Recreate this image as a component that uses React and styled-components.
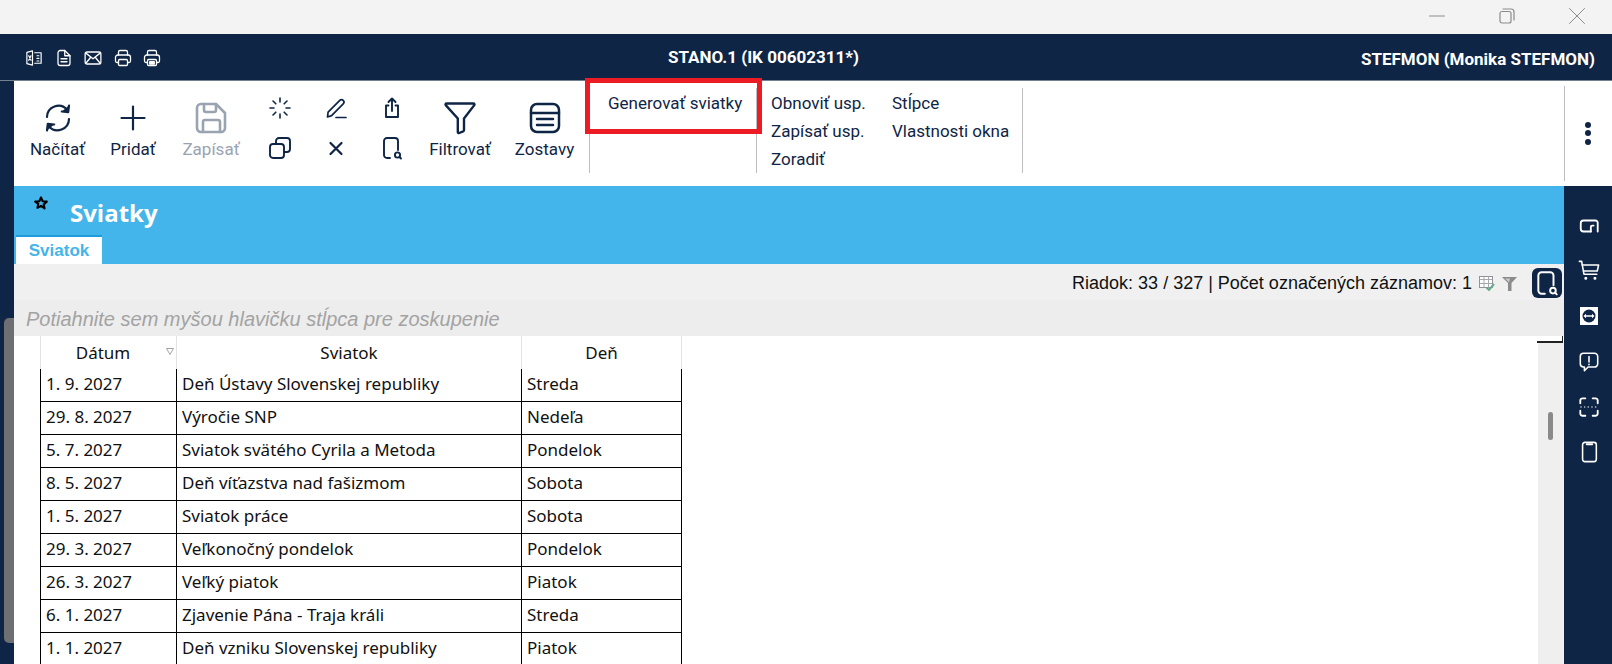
import React from "react";
import styled, { createGlobalStyle } from "styled-components";

const NAVY = "#0f2545";
const SKY = "#44b5ea";

const GlobalStyle = createGlobalStyle`
  html, body { margin: 0; padding: 0; overflow: hidden; background: #fff; }
  * { box-sizing: border-box; }
`;

const Page = styled.div`
  width: 1612px;
  height: 664px;
  display: flex;
  flex-direction: column;
  overflow: hidden;
  font-family: Roboto, sans-serif;
`;

const TitleBar = styled.div`
  height: 34px;
  flex: none;
  display: flex;
  justify-content: flex-end;
  background: #f3f3f3;
`;

const WindowButton = styled.div`
  width: 70px;
  display: flex;
  align-items: center;
  justify-content: center;
  padding-bottom: 2px;
`;

const Header = styled.header`
  height: 47px;
  flex: none;
  display: flex;
  align-items: center;
  padding: 0 17px 0 25px;
  background: ${NAVY};
  border-bottom: 1px solid #74808f;
  color: #fff;
`;

const HeaderIcons = styled.div`
  width: 643px;
  display: flex;
  gap: 11.5px;
  padding-top: 2px;
`;

const CompanyName = styled.div`
  font-size: 17px;
  font-weight: 700;
`;

const UserName = styled.div`
  margin-left: auto;
  margin-top: 4px;
  font-size: 17px;
  font-weight: 700;
`;

const Workspace = styled.div`
  flex: 1;
  min-height: 0;
  display: flex;
  background: ${NAVY};
`;

const LeftStrip = styled.div`
  width: 14px;
  flex: none;
  padding: 237px 0 0 4px;
`;

const PageThumb = styled.div`
  height: 325px;
  background: #6d6f72;
  border-radius: 5px 0 0 5px;
`;

const Main = styled.div`
  flex: 1;
  min-width: 0;
  display: flex;
  flex-direction: column;
`;

const Toolbar = styled.div`
  height: 105px;
  flex: none;
  display: flex;
  align-items: flex-start;
  padding: 7px 0 0 5px;
  background: #fff;
  color: ${NAVY};
  font-size: 17px;
`;

const BigButton = styled.div`
  width: ${(p) => p.$width}px;
  height: 85px;
  flex: none;
  display: flex;
  flex-direction: column;
  align-items: center;
  padding-top: 14px;
  color: ${(p) => (p.$disabled ? "#9aa3b1" : NAVY)};
  ${(p) => p.$divider && "border-right: 1px solid #bdbdbd;"}
`;

const BigIcon = styled.div`
  height: 32px;
  display: flex;
  align-items: center;
  justify-content: center;
`;

const BigLabel = styled.div`
  margin-top: 6px;
  line-height: 18px;
`;

const SmallGrid = styled.div`
  width: 168px;
  flex: none;
  display: grid;
  grid-template-columns: repeat(3, 56px);
  grid-auto-rows: 24px;
  row-gap: 16px;
  justify-items: center;
  padding-top: 8px;
`;

const GeneratorGroup = styled.div`
  position: relative;
  width: 167px;
  height: 85px;
  flex: none;
  padding: 1px 0 0 18px;
  border-right: 1px solid #bdbdbd;
  line-height: 28px;
`;

const Highlight = styled.div`
  position: absolute;
  left: -5px;
  top: -10px;
  width: 177px;
  height: 56px;
  border: 5px solid #ed1c24;
`;

const TextGroup = styled.div`
  width: 266px;
  height: 85px;
  flex: none;
  display: grid;
  grid-template-columns: 121px 1fr;
  grid-auto-rows: 28px;
  align-items: center;
  padding: 1px 0 0 14px;
  border-right: 1px solid #bdbdbd;
`;

const MoreButton = styled.div`
  width: 48px;
  height: 95px;
  flex: none;
  margin: -2px 0 0 auto;
  display: flex;
  flex-direction: column;
  align-items: center;
  justify-content: center;
  gap: 2.5px;
  padding: 0 1px 1px 0;
  border-left: 1px solid #bdbdbd;
`;

const Dot = styled.span`
  width: 6px;
  height: 6px;
  border-radius: 50%;
  background: ${NAVY};
`;

const BodyRow = styled.div`
  flex: 1;
  min-height: 0;
  display: flex;
`;

const Content = styled.div`
  flex: 1;
  min-width: 0;
  display: flex;
  flex-direction: column;
  background: #fff;
`;

const Banner = styled.div`
  height: 78px;
  flex: none;
  display: flex;
  flex-direction: column;
  background: ${SKY};
`;

const BannerHead = styled.div`
  height: 49px;
  display: flex;
  align-items: flex-start;
  padding-left: 20px;
`;

const Star = styled.div`
  margin-top: 9px;
  height: 14px;
`;

const PageTitle = styled.h1`
  margin: 12px 0 0 22px;
  font-family: "Open Sans", sans-serif;
  font-size: 24px;
  line-height: 30px;
  font-weight: 700;
  color: #fff;
`;

const Tab = styled.div`
  width: 86px;
  height: 29px;
  margin-left: 2px;
  display: flex;
  align-items: center;
  justify-content: center;
  border-top: 2px solid #1f9bdb;
  background: #fff;
  color: ${SKY};
  font-family: "Liberation Sans", sans-serif;
  font-size: 17px;
  font-weight: 700;
`;

const StatusBar = styled.div`
  height: 36px;
  flex: none;
  display: flex;
  align-items: center;
  justify-content: flex-end;
  padding: 2px 2px 0 0;
  background: #f0f0f0;
  font-family: "Liberation Sans", sans-serif;
  font-size: 18px;
  color: #111;
`;

const StatusText = styled.div`
  margin: 1px 7px 0 0;
`;

const StatusIcon = styled.div`
  height: 16px;
  margin-right: ${(p) => p.$gap}px;
`;

const SearchButton = styled.div`
  width: 30px;
  height: 30px;
  display: flex;
  align-items: center;
  justify-content: center;
  border-radius: 6px;
  background: ${NAVY};
  color: #fff;
`;

const GroupBar = styled.div`
  height: 36px;
  flex: none;
  display: flex;
  align-items: center;
  padding: 2px 0 0 12px;
  background: #ededed;
  color: #a3a3a3;
  font-family: "Liberation Sans", sans-serif;
  font-size: 20px;
  font-style: italic;
`;

const TableArea = styled.div`
  flex: 1;
  min-height: 0;
  display: flex;
`;

const TableWrap = styled.div`
  flex: 1;
  min-width: 0;
  overflow: hidden;
  padding-left: 26px;
`;

const Table = styled.table`
  width: 641px;
  table-layout: fixed;
  border-collapse: collapse;
  font-family: "Noto Sans", sans-serif;
  font-size: 17px;
  color: #111;
`;

const HeadCell = styled.th`
  position: relative;
  height: 33px;
  padding: 0 ${(p) => (p.$sorted ? 11 : 0)}px 0 0;
  border-left: 1px solid #e3e3e3;
  border-right: 1px solid #e3e3e3;
  font-weight: 400;
  text-align: center;
`;

const SortMark = styled.span`
  position: absolute;
  top: 12px;
  right: 2px;
  display: flex;
`;

const Cell = styled.td`
  height: 33px;
  padding: 0 0 2px 5px;
  border: 1px solid #000;
  white-space: nowrap;
`;

const HolidayRow = styled.tr`
  &:first-child td {
    height: 32px;
    border-top: none;
  }
`;

const ScrollTrack = styled.div`
  position: relative;
  width: 26px;
  flex: none;
  margin-top: 6px;
  padding: 70px 0 0 10px;
  background: #efefef;
`;

const ScrollCorner = styled.div`
  position: absolute;
  top: -6px;
  left: -1px;
  width: 26px;
  height: 7px;
  border-bottom: 2px solid #222;
  border-right: 1px solid #222;
`;

const ScrollThumb = styled.div`
  width: 5px;
  height: 28px;
  border-radius: 3px;
  background: #8a8a8a;
`;

const SideRail = styled.nav`
  width: 48px;
  flex: none;
  display: flex;
  flex-direction: column;
  align-items: center;
  gap: 23.2px;
  padding: 29px 0 0 2px;
  color: #fff;
`;

const Line = ({ size = 24, box = 24, color = "currentColor", width = 2, children }) => (
  <svg
    width={size}
    height={size}
    viewBox={`0 0 ${box} ${box}`}
    fill="none"
    stroke={color}
    strokeWidth={width}
    strokeLinecap="round"
    strokeLinejoin="round"
  >
    {children}
  </svg>
);

const RefreshIcon = () => (
  <Line size={32} box={32} width={2.2}>
    <path d="M5 15a11.5 11.5 0 0 1 20-7.5" />
    <path d="M27 3.5l-.8 6.6-6.4-.6" fill="currentColor" />
    <path d="M27 17a11.5 11.5 0 0 1-20 7.5" />
    <path d="M5 28.5l.8-6.6 6.4.6" fill="currentColor" />
  </Line>
);

const PlusIcon = () => (
  <Line size={26} box={26} width={2.2}>
    <path d="M13 1.5v23M1.5 13h23" />
  </Line>
);

const SaveIcon = () => (
  <Line size={32} box={32} width={2.6}>
    <path d="M6 2h15l9 9v15a4 4 0 0 1-4 4H6a4 4 0 0 1-4-4V6a4 4 0 0 1 4-4z" />
    <path d="M9 2v6a2 2 0 0 0 2 2h8a2 2 0 0 0 2-2V2" />
    <path d="M8 30V20a2 2 0 0 1 2-2h13a2 2 0 0 1 2 2v10" />
  </Line>
);

const SpinnerIcon = () => (
  <Line width={1.6}>
    <path d="M12 2v4M12 18v4M2 12h4M18 12h4M5 5l2.8 2.8M16.2 16.2L19 19M5 19l2.8-2.8M16.2 7.8L19 5" />
  </Line>
);

const PencilIcon = () => (
  <Line width={1.7}>
    <path d="M3.5 21l.6-4.8L15.8 4.4a2.4 2.4 0 0 1 3.4 3.4L7.6 19.6 3.5 21z" />
    <path d="M12 21.5h10" />
  </Line>
);

const ShareIcon = () => (
  <Line width={1.9}>
    <path d="M8.5 9.5H6v11.5h12V9.5h-2.5" />
    <path d="M12 15V3M8.5 6L12 2.5 15.5 6" />
  </Line>
);

const CopyIcon = () => (
  <Line width={1.9}>
    <rect x="2" y="8" width="14" height="14" rx="3" />
    <path d="M8 8V5a3 3 0 0 1 3-3h8a3 3 0 0 1 3 3v8a3 3 0 0 1-3 3h-3" />
  </Line>
);

const CloseIcon = () => (
  <Line width={2.2}>
    <path d="M6.5 7l11 11M17.5 7l-11 11" />
  </Line>
);

const FindIcon = ({ size = 24, width = 1.9 }) => (
  <Line size={size} width={width}>
    <path d="M10 22H7a3 3 0 0 1-3-3V5a3 3 0 0 1 3-3h8a3 3 0 0 1 3 3v9" />
    <circle cx="17.5" cy="19" r="2.6" />
    <path d="M19.5 21l1.5 1.5" />
  </Line>
);

const FilterIcon = () => (
  <Line size={34} box={34} width={2.4}>
    <path d="M3.5 2.5h27a1 1 0 0 1 .8 1.6L21 17.5v11.5a1.5 1.5 0 0 1-.8 1.3l-4 1.7a1 1 0 0 1-1.4-1V17.5L2.7 4.1a1 1 0 0 1 .8-1.6z" />
  </Line>
);

const ReportsIcon = () => (
  <Line size={32} box={32} width={2.5}>
    <rect x="2" y="2" width="28" height="28" rx="6" />
    <path d="M2 11h28M8 17h16M8 23h16" />
  </Line>
);

const ExcelIcon = () => (
  <Line size={18} width={1.6}>
    <path d="M10 2.5l-7.5 2v15l7.5 2V2.5zM13 5h8.5v14H13M16 9h2.5M16 12.5h2.5M16 16h2.5" />
    <path d="M5 9l3 6M8 9l-3 6" />
  </Line>
);

const DocIcon = () => (
  <Line size={18} width={1.7}>
    <path d="M13 2H7a3 3 0 0 0-3 3v14a3 3 0 0 0 3 3h10a3 3 0 0 0 3-3V9l-7-7z" />
    <path d="M13 2v7h7M8 13h8M8 17h8" />
  </Line>
);

const MailIcon = () => (
  <Line size={18} width={1.7}>
    <rect x="1.5" y="4" width="21" height="16" rx="2.5" />
    <path d="M2.5 5.5L12 13l9.5-7.5M2.5 19L9 11M21.5 19L15 11" />
  </Line>
);

const PrintIcon = ({ fax }) => (
  <Line size={18} width={1.7}>
    <path d="M6 8V4a2 2 0 0 1 2-2h8a2 2 0 0 1 2 2v4" />
    <path d="M6 18H4a2 2 0 0 1-2-2v-5a3 3 0 0 1 3-3h14a3 3 0 0 1 3 3v5a2 2 0 0 1-2 2h-2" />
    <rect x="6" y="14" width="12" height="8" rx="1.5" />
    {fax && <path d="M9 17h6v3H9z" fill="currentColor" />}
  </Line>
);

const StarIcon = () => (
  <Line size={14} box={24} width={3.6} color="#000">
    <path d="M12 2.5l2.9 6.4 7 .8-5.2 4.7 1.4 6.9L12 16.8l-6.1 3.5 1.4-6.9L2.1 9.7l7-.8z" />
  </Line>
);

const GridCheckIcon = () => (
  <svg width="16" height="16" viewBox="0 0 16 16" fill="none">
    <rect x="0.5" y="1.5" width="13" height="11" fill="#fff" stroke="#8f9399" />
    <path d="M0.5 4.5h13M5 1.5v11M9.5 1.5v11M0.5 8.5h13" stroke="#a5a9ae" />
    <path d="M7.5 12.5l2.5 2.5 5-6" stroke="#69a98a" strokeWidth="2" />
  </svg>
);

const FunnelIcon = () => (
  <svg width="15" height="15" viewBox="0 0 15 15">
    <path d="M0 1h15L9.5 7v8H6V7z" fill="#8b8b8b" />
    <path d="M3 2.5h5L7 6.5z" fill="#c9c9c9" />
  </svg>
);

const SortIcon = () => (
  <svg width="8" height="7" viewBox="0 0 8 7" fill="none">
    <path d="M0.5 0.5h7L4 6.5z" stroke="#a5a5a5" />
  </svg>
);

const LoopIcon = () => (
  <Line size={22} width={2}>
    <path d="M14 18H6a3 3 0 0 1-3-3V9a3 3 0 0 1 3-3h13a2.5 2.5 0 0 1 2.5 2.5V18" />
    <path d="M14 18v-5a1.5 1.5 0 0 1 1.5-1.5H17" />
  </Line>
);

const CartIcon = () => (
  <Line size={22} width={1.7}>
    <path d="M1.5 1.5h2.5L6.5 15.5h14" />
    <path d="M4.5 5.5h18l-1.5 6.5H6" />
    <circle cx="8.5" cy="20" r="0.8" fill="currentColor" />
    <circle cx="18.5" cy="20" r="0.8" fill="currentColor" />
  </Line>
);

const RemoteIcon = () => (
  <svg width="22" height="22" viewBox="-2 -2 22 22">
    <rect width="18" height="18" fill="#fff" />
    <circle cx="9" cy="9" r="6.5" fill={NAVY} />
    <path d="M3.5 9L6 6.8v1.4h6V6.8L14.5 9 12 11.2V9.8H6v1.4z" fill="#fff" />
  </svg>
);

const AlertIcon = () => (
  <Line size={22} width={1.7}>
    <path d="M6 2.5h12a3.5 3.5 0 0 1 3.5 3.5v8a3.5 3.5 0 0 1-3.5 3.5h-7l-4 4v-4H6A3.5 3.5 0 0 1 2.5 14V6A3.5 3.5 0 0 1 6 2.500z" />
    <path d="M12 6v6M12 14.5v.5" />
  </Line>
);

const ScanIcon = () => (
  <Line size={22} width={2}>
    <path d="M8 2.5H5A2.5 2.5 0 0 0 2.5 5v3M16 2.5h3A2.5 2.5 0 0 1 21.5 5v3M8 21.5H5A2.5 2.5 0 0 1 2.5 19v-3M16 21.5h3a2.5 2.5 0 0 0 2.500-2.5v-3" />
    <path d="M2.5 12h19" strokeWidth="1.3" strokeDasharray="1.5 2.5" strokeLinecap="butt" />
  </Line>
);

const PhoneIcon = () => (
  <Line size={22} width={1.7}>
    <rect x="5" y="1.5" width="15" height="21" rx="2.5" />
    <path d="M9.5 3.5h6" strokeWidth="2" />
  </Line>
);

const HOLIDAYS = [
  ["1. 9. 2027", "Deň Ústavy Slovenskej republiky", "Streda"],
  ["29. 8. 2027", "Výročie SNP", "Nedeľa"],
  ["5. 7. 2027", "Sviatok svätého Cyrila a Metoda", "Pondelok"],
  ["8. 5. 2027", "Deň víťazstva nad fašizmom", "Sobota"],
  ["1. 5. 2027", "Sviatok práce", "Sobota"],
  ["29. 3. 2027", "Veľkonočný pondelok", "Pondelok"],
  ["26. 3. 2027", "Veľký piatok", "Piatok"],
  ["6. 1. 2027", "Zjavenie Pána - Traja králi", "Streda"],
  ["1. 1. 2027", "Deň vzniku Slovenskej republiky", "Piatok"],
];

const App = () => {
  return (
    <Page>
      <GlobalStyle />
      <TitleBar>
        <WindowButton>
          <Line size={16} box={16} color="#8c8c8c" width={1}>
            <path d="M0.5 8h15" />
          </Line>
        </WindowButton>
        <WindowButton>
          <Line size={16} box={16} color="#8c8c8c" width={1.2}>
            <rect x="1" y="3.5" width="11" height="11.5" rx="2" />
            <path d="M4 1h8a3 3 0 0 1 3 3v8" />
          </Line>
        </WindowButton>
        <WindowButton>
          <Line size={16} box={16} color="#8c8c8c" width={1}>
            <path d="M0.5 0.5l15 15M15.5 0.5l-15 15" />
          </Line>
        </WindowButton>
      </TitleBar>

      <Header>
        <HeaderIcons>
          <ExcelIcon />
          <DocIcon />
          <MailIcon />
          <PrintIcon />
          <PrintIcon fax />
        </HeaderIcons>
        <CompanyName>STANO.1 (IK 00602311*)</CompanyName>
        <UserName>STEFMON (Monika STEFMON)</UserName>
      </Header>

      <Workspace>
        <LeftStrip>
          <PageThumb />
        </LeftStrip>
        <Main>
          <Toolbar>
            <BigButton $width={77}>
              <BigIcon>
                <RefreshIcon />
              </BigIcon>
              <BigLabel>Načítať</BigLabel>
            </BigButton>
            <BigButton $width={74}>
              <BigIcon>
                <PlusIcon />
              </BigIcon>
              <BigLabel>Pridať</BigLabel>
            </BigButton>
            <BigButton $width={82} $disabled>
              <BigIcon>
                <SaveIcon />
              </BigIcon>
              <BigLabel>Zapísať</BigLabel>
            </BigButton>
            <SmallGrid>
              <SpinnerIcon />
              <PencilIcon />
              <ShareIcon />
              <CopyIcon />
              <CloseIcon />
              <FindIcon />
            </SmallGrid>
            <BigButton $width={80}>
              <BigIcon>
                <FilterIcon />
              </BigIcon>
              <BigLabel>Filtrovať</BigLabel>
            </BigButton>
            <BigButton $width={90} $divider>
              <BigIcon>
                <ReportsIcon />
              </BigIcon>
              <BigLabel>Zostavy</BigLabel>
            </BigButton>
            <GeneratorGroup>
              Generovať sviatky
              <Highlight />
            </GeneratorGroup>
            <TextGroup>
              <span>Obnoviť usp.</span>
              <span>Stĺpce</span>
              <span>Zapísať usp.</span>
              <span>Vlastnosti okna</span>
              <span>Zoradiť</span>
            </TextGroup>
            <MoreButton>
              <Dot />
              <Dot />
              <Dot />
            </MoreButton>
          </Toolbar>

          <BodyRow>
            <Content>
              <Banner>
                <BannerHead>
                  <Star>
                    <StarIcon />
                  </Star>
                  <PageTitle>Sviatky</PageTitle>
                </BannerHead>
                <Tab>Sviatok</Tab>
              </Banner>
              <StatusBar>
                <StatusText>Riadok: 33 / 327 | Počet označených záznamov: 1</StatusText>
                <StatusIcon $gap={7}>
                  <GridCheckIcon />
                </StatusIcon>
                <StatusIcon $gap={15}>
                  <FunnelIcon />
                </StatusIcon>
                <SearchButton>
                  <FindIcon size={26} width={1.8} />
                </SearchButton>
              </StatusBar>
              <GroupBar>Potiahnite sem myšou hlavičku stĺpca pre zoskupenie</GroupBar>
              <TableArea>
                <TableWrap>
                  <Table>
                    <colgroup>
                      <col width="136" />
                      <col width="345" />
                      <col width="160" />
                    </colgroup>
                    <thead>
                      <tr>
                        <HeadCell $sorted>
                          Dátum
                          <SortMark>
                            <SortIcon />
                          </SortMark>
                        </HeadCell>
                        <HeadCell>Sviatok</HeadCell>
                        <HeadCell>Deň</HeadCell>
                      </tr>
                    </thead>
                    <tbody>
                      {HOLIDAYS.map(([date, name, day]) => (
                        <HolidayRow key={date}>
                          <Cell>{date}</Cell>
                          <Cell>{name}</Cell>
                          <Cell>{day}</Cell>
                        </HolidayRow>
                      ))}
                    </tbody>
                  </Table>
                </TableWrap>
                <ScrollTrack>
                  <ScrollCorner />
                  <ScrollThumb />
                </ScrollTrack>
              </TableArea>
            </Content>
            <SideRail>
              <LoopIcon />
              <CartIcon />
              <RemoteIcon />
              <AlertIcon />
              <ScanIcon />
              <PhoneIcon />
            </SideRail>
          </BodyRow>
        </Main>
      </Workspace>
    </Page>
  );
};

export default App;
